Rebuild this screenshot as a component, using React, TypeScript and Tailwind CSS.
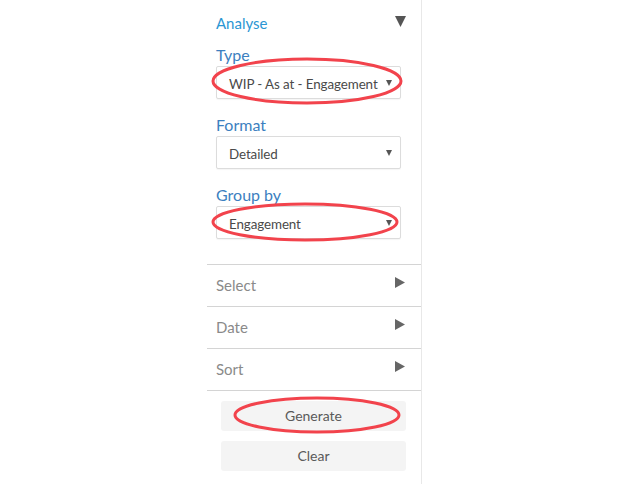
const fields = [
  { label: 'Type', value: 'WIP - As at - Engagement' },
  { label: 'Format', value: 'Detailed' },
  { label: 'Group by', value: 'Engagement' },
];

const sections = ['Select', 'Date', 'Sort'];

function SelectBox({ value }: { value: string }) {
  return (
    <div className="ml-[9px] w-[185px] h-[33px] border border-[#dcdcdc] rounded-[2px] bg-white flex items-center pl-[12px] pr-[8px] shadow-[0_1px_1px_rgba(0,0,0,0.04)]">
      <span className="flex-1 pt-[3px] text-[13.4px] tracking-[-0.1px] text-[#4a4a4a] whitespace-nowrap">{value}</span>
      <svg width="6" height="6" viewBox="0 0 6 6" className="ml-[2px] shrink-0">
        <polygon points="0,0 6,0 3,6" fill="#555" />
      </svg>
    </div>
  );
}

export default function App() {
  return (
    <div className="relative w-[630px] h-[484px] bg-white flex font-['Lato','Liberation_Sans',sans-serif] overflow-hidden">
      <div className="w-[207px]" />

      {/* Side panel */}
      <div className="w-[215px] border-r border-[#e8e8e8] flex flex-col">
        <div className="pt-[13px] pb-[25px]">
          <div className="h-[20px] pl-[9px] pr-[15px] flex items-center justify-between">
            <span className="text-[15px] text-[#2b96d3]">Analyse</span>
            <svg width="11" height="11" viewBox="0 0 11 11" className="-mt-[3px]">
              <polygon points="0,0 11,0 5.5,11" fill="#555" />
            </svg>
          </div>
          {fields.map((f, i) => (
            <div key={f.label} className={i === 0 ? 'mt-[12px]' : 'mt-[16px]'}>
              <div className="h-[20px] pl-[9px] text-[16px] leading-[20px] text-[#3c7fc0]">{f.label}</div>
              <div className="mt-[1px]">
                <SelectBox value={f.value} />
              </div>
            </div>
          ))}
        </div>

        {sections.map((s) => (
          <div key={s} className="h-[42px] border-t border-[#d4d4d4] pl-[9px] pr-[16px] flex items-center justify-between">
            <span className="text-[15px] text-[#8a8a8a]">{s}</span>
            <svg width="10" height="11" viewBox="0 0 10 11" className="-mt-[6px]">
              <polygon points="0,0 10,5.5 0,11" fill="#666" />
            </svg>
          </div>
        ))}

        <div className="border-t border-[#d4d4d4] pt-[10px] pl-[14px] flex flex-col gap-[10px]">
          <button className="w-[185px] h-[30px] bg-[#f4f4f4] rounded-[3px] text-[14px] text-[#5a5a5a] pb-[1px]">Generate</button>
          <button className="w-[185px] h-[30px] bg-[#f4f4f4] rounded-[3px] text-[14px] text-[#5a5a5a] pb-[1px]">Clear</button>
        </div>
      </div>

      {/* annotation marks */}
      <svg className="absolute inset-0 pointer-events-none" width="630" height="484">
        <ellipse cx="307" cy="81" rx="94" ry="22" fill="none" stroke="#f2434c" strokeWidth="3" />
        <ellipse cx="305" cy="222" rx="92" ry="18" fill="none" stroke="#f2434c" strokeWidth="3" />
        <ellipse cx="317" cy="415" rx="82" ry="17" fill="none" stroke="#f2434c" strokeWidth="3" />
      </svg>
    </div>
  );
}
